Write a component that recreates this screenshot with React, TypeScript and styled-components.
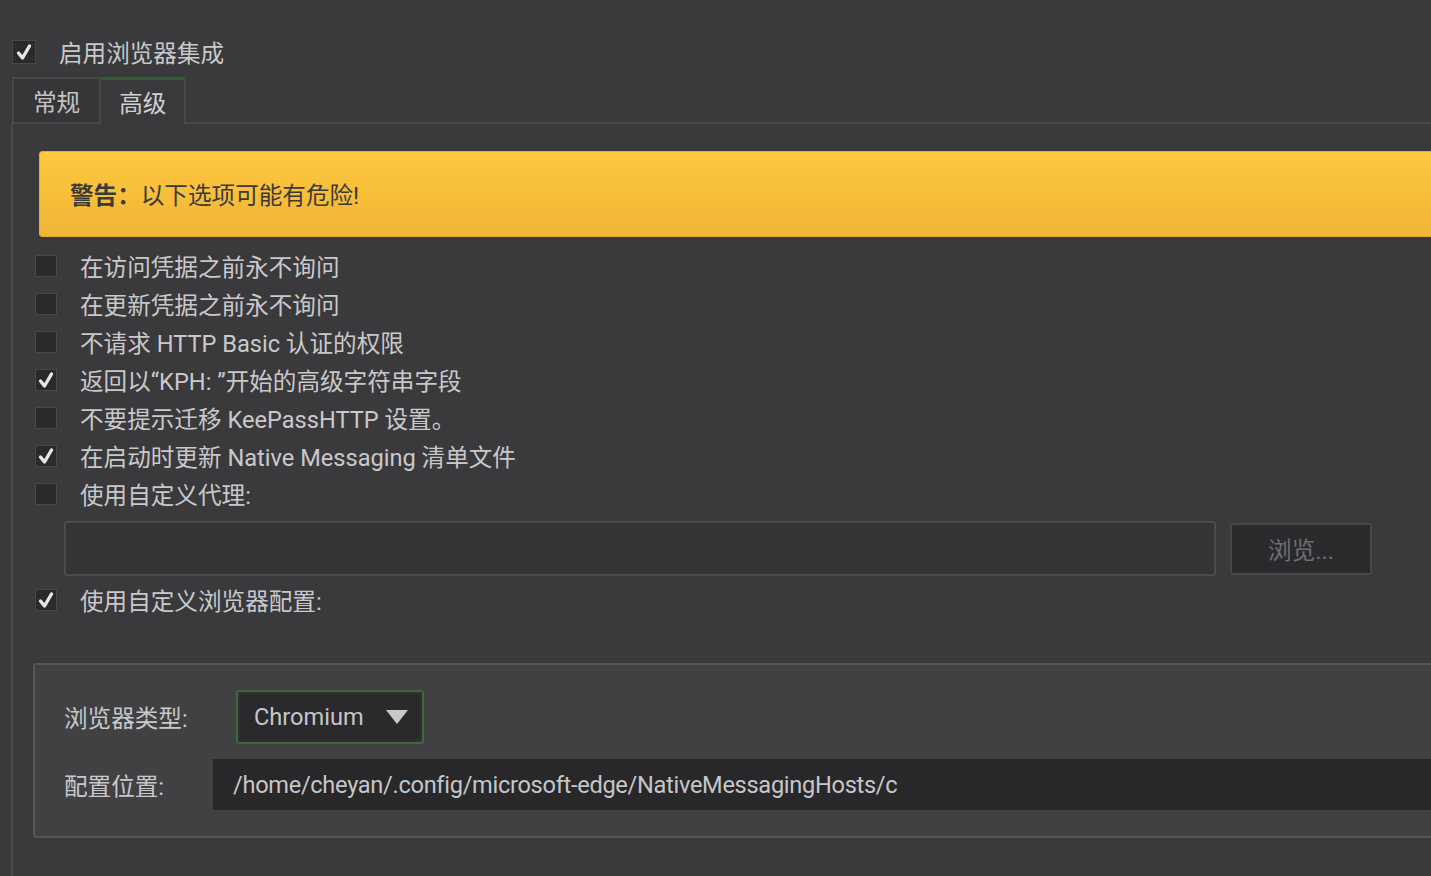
import styled, {createGlobalStyle} from "styled-components";

const GlobalStyle = createGlobalStyle`
    html, body {
        margin: 0;
        padding: 0;
        background: #3a3a3c;
        overflow: hidden;
    }
    body {
        font-family: Roboto, "Noto Sans CJK SC", sans-serif;
        color: #c9c9cb;
    }
`;

const Page = styled.div`
    width: 1520px;
    height: 876px;
    padding: 40px 0 0 12px;
    box-sizing: border-box;
    display: flex;
    flex-direction: column;
    font-size: 23.6px;
`;

const TopRow = styled.label`
    display: flex;
    align-items: center;
    gap: 23px;
    height: 24px;
`;

const Box = styled.span<{$big?: boolean}>`
    width: ${(p) => (p.$big ? 24 : 22)}px;
    height: ${(p) => (p.$big ? 24 : 22)}px;
    box-sizing: border-box;
    flex: none;
    background: #2a2a2c;
    border: 1px solid #48484b;
    display: flex;
    align-items: center;
    justify-content: center;
`;

const TabBar = styled.div`
    display: flex;
    margin-top: 13px;
    position: relative;
    z-index: 1;
`;

const Tab = styled.div<{$active?: boolean}>`
    height: ${(p) => (p.$active ? 48 : 47)}px;
    box-sizing: border-box;
    padding: 0 ${(p) => (p.$active ? 18 : 19)}px;
    display: flex;
    align-items: center;
    border: 2px solid #48484b;
    border-top: ${(p) => (p.$active ? "3px solid #2f5f2e" : "2px solid #48484b")};
    border-bottom: ${(p) => (p.$active ? "none" : "2px solid #48484b")};
    border-left: ${(p) => (p.$active ? "none" : "2px solid #48484b")};
    background: ${(p) => (p.$active ? "#3a3a3c" : "#363638")};
    color: ${(p) => (p.$active ? "#d0d0d2" : "#c4c4c6")};
    margin-bottom: ${(p) => (p.$active ? "-2px" : "0")};
    padding-bottom: ${(p) => (p.$active ? "2px" : "0")};
`;

const Pane = styled.div`
    flex: 1;
    margin-top: -2px;
    margin-left: -1px;
    border-left: 2px solid #48484b;
    border-top: 2px solid #48484b;
    padding: 27px 0 0 22px;
    display: flex;
    flex-direction: column;
`;

const Warning = styled.div`
    margin-left: 4px;
    height: 86px;
    box-sizing: border-box;
    border: 1px solid #e6ac2f;
    border-radius: 3px;
    background: linear-gradient(#fec83f, #f1b535);
    color: #3b3a36;
    display: flex;
    align-items: center;
    padding: 0 0 0 30px;
    margin-bottom: 10px;
`;

const WarnTitle = styled.b`
    font-weight: 700;
`;

const Row = styled.label`
    display: flex;
    align-items: center;
    gap: 23px;
    height: 38px;
`;

const ProxyRow = styled.div`
    display: flex;
    align-items: center;
    gap: 14px;
    width: 1308px;
    margin: 8px 0 5px 29px;
`;

const TextInput = styled.div`
    flex: 1;
    height: 55px;
    box-sizing: border-box;
    background: #343436;
    border: 2px solid #4b4b4e;
    border-radius: 3px;
`;

const BrowseButton = styled.div`
    width: 142px;
    height: 52px;
    box-sizing: border-box;
    background: #2a2a2c;
    border: 2px solid #47474a;
    border-radius: 3px;
    color: #6f6f72;
    display: flex;
    align-items: center;
    justify-content: center;
`;

const Group = styled.div`
    margin: 44px 0 0 -2px;
    border: 2px solid #555558;
    border-radius: 3px;
    background: #414144;
    padding: 25px 0 26px 29px;
    display: flex;
    flex-direction: column;
    gap: 15px;
`;

const FormRow = styled.div<{$labelWidth: number}>`
    display: grid;
    grid-template-columns: ${(p) => p.$labelWidth}px 1fr;
    align-items: center;
`;

const Combo = styled.div`
    width: 188px;
    height: 54px;
    box-sizing: border-box;
    border: 2px solid #3b6b38;
    border-radius: 3px;
    background: #2a2a2c;
    box-shadow: inset 0 0 0 2px #313134;
    display: flex;
    align-items: center;
    justify-content: space-between;
    padding: 0 14px 0 16px;
    color: #c6c6c8;
`;

const PathField = styled.div`
    height: 51px;
    background: #28282a;
    padding-left: 20px;
    display: flex;
    align-items: center;
    color: #c6c6c8;
    letter-spacing: -0.3px;
    white-space: nowrap;
    overflow: hidden;
`;

function Check({on, big}: {on?: boolean; big?: boolean}) {
    return (
        <Box $big={big}>
            {on && (
                <svg width="18" height="18" viewBox="0 0 18 18">
                    <path
                        d="M3.5 10 L7.5 15 L14.5 3"
                        fill="none"
                        stroke="#e6e6e8"
                        strokeWidth="3.4"
                        strokeLinecap="round"
                        strokeLinejoin="round"
                    />
                </svg>
            )}
        </Box>
    );
}

const options: [string, boolean][] = [
    ["在访问凭据之前永不询问", false],
    ["在更新凭据之前永不询问", false],
    ["不请求 HTTP Basic 认证的权限", false],
    ["返回以“KPH: ”开始的高级字符串字段", true],
    ["不要提示迁移 KeePassHTTP 设置。", false],
    ["在启动时更新 Native Messaging 清单文件", true],
    ["使用自定义代理:", false],
];

export default function App() {
    return (
        <>
            <GlobalStyle />
            <Page>
                <TopRow>
                    <Check on big />
                    启用浏览器集成
                </TopRow>
                <TabBar>
                    <Tab>常规</Tab>
                    <Tab $active>高级</Tab>
                </TabBar>
                <Pane>
                    <Warning>
                        <WarnTitle>警告：</WarnTitle>以下选项可能有危险!
                    </Warning>
                    {options.map(([text, on]) => (
                        <Row key={text}>
                            <Check on={on} />
                            {text}
                        </Row>
                    ))}
                    <ProxyRow>
                        <TextInput />
                        <BrowseButton>浏览...</BrowseButton>
                    </ProxyRow>
                    <Row>
                        <Check on />
                        使用自定义浏览器配置:
                    </Row>
                    <Group>
                        <FormRow $labelWidth={172}>
                            <span>浏览器类型:</span>
                            <Combo>
                                Chromium
                                <svg width="22" height="14" viewBox="0 0 22 14">
                                    <path d="M0 0 H22 L11 14 Z" fill="#c8c8ca" />
                                </svg>
                            </Combo>
                        </FormRow>
                        <FormRow $labelWidth={149}>
                            <span>配置位置:</span>
                            <PathField>
                                /home/cheyan/.config/microsoft-edge/NativeMessagingHosts/c
                            </PathField>
                        </FormRow>
                    </Group>
                </Pane>
            </Page>
        </>
    );
}
